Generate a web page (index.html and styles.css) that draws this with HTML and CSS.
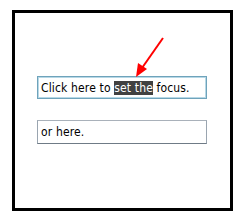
FILE: index.html
```html
<!DOCTYPE html>
<html lang="en">
<head>
    <meta charset="UTF-8">
    <title>Focus</title>
    <link rel="stylesheet" href="styles.css">
</head>
<body>
    <div class="frame">
        <div class="textbox textbox-focused">Click here to <span class="selected">set the</span> focus.</div>
        <div class="textbox">or here.</div>
        <svg class="arrow" width="40" height="45" viewBox="0 0 40 45">
            <line x1="32" y1="3" x2="11" y2="33" stroke="#f00" stroke-width="2"/>
            <polygon points="5,42 7,28 16,34" fill="#f00"/>
        </svg>
    </div>
</body>
</html>
```

FILE: styles.css
```css
body {
    margin: 0;
    background: #fff;
}

.frame {
    position: relative;
    box-sizing: border-box;
    width: 221px;
    height: 201px;
    margin: 10px 0 0 12px;
    border: 3px solid #000;
    padding: 63px 0 0 22px;
    display: flex;
    flex-direction: column;
    gap: 21px;
}

.textbox {
    box-sizing: border-box;
    width: 170px;
    height: 24px;
    padding: 3px 0 0 3px;
    border: 1px solid;
    border-color: #a9b1ba #9aa5b0 #6f7b86 #9aa5b0;
    font-family: Tahoma, "DejaVu Sans Condensed", "DejaVu Sans", sans-serif;
    font-stretch: condensed;
    font-size: 12px;
    letter-spacing: 0.15px;
    line-height: 16px;
    color: #000;
    white-space: nowrap;
}

.textbox-focused {
    height: 23px;
    border-color: #6fa3bb;
    box-shadow: inset 0 0 0 1px #b7d8e6;
}

.selected {
    background: #414141;
    color: #fff;
}

.arrow {
    position: absolute;
    left: 116px;
    top: 22px;
}
```
